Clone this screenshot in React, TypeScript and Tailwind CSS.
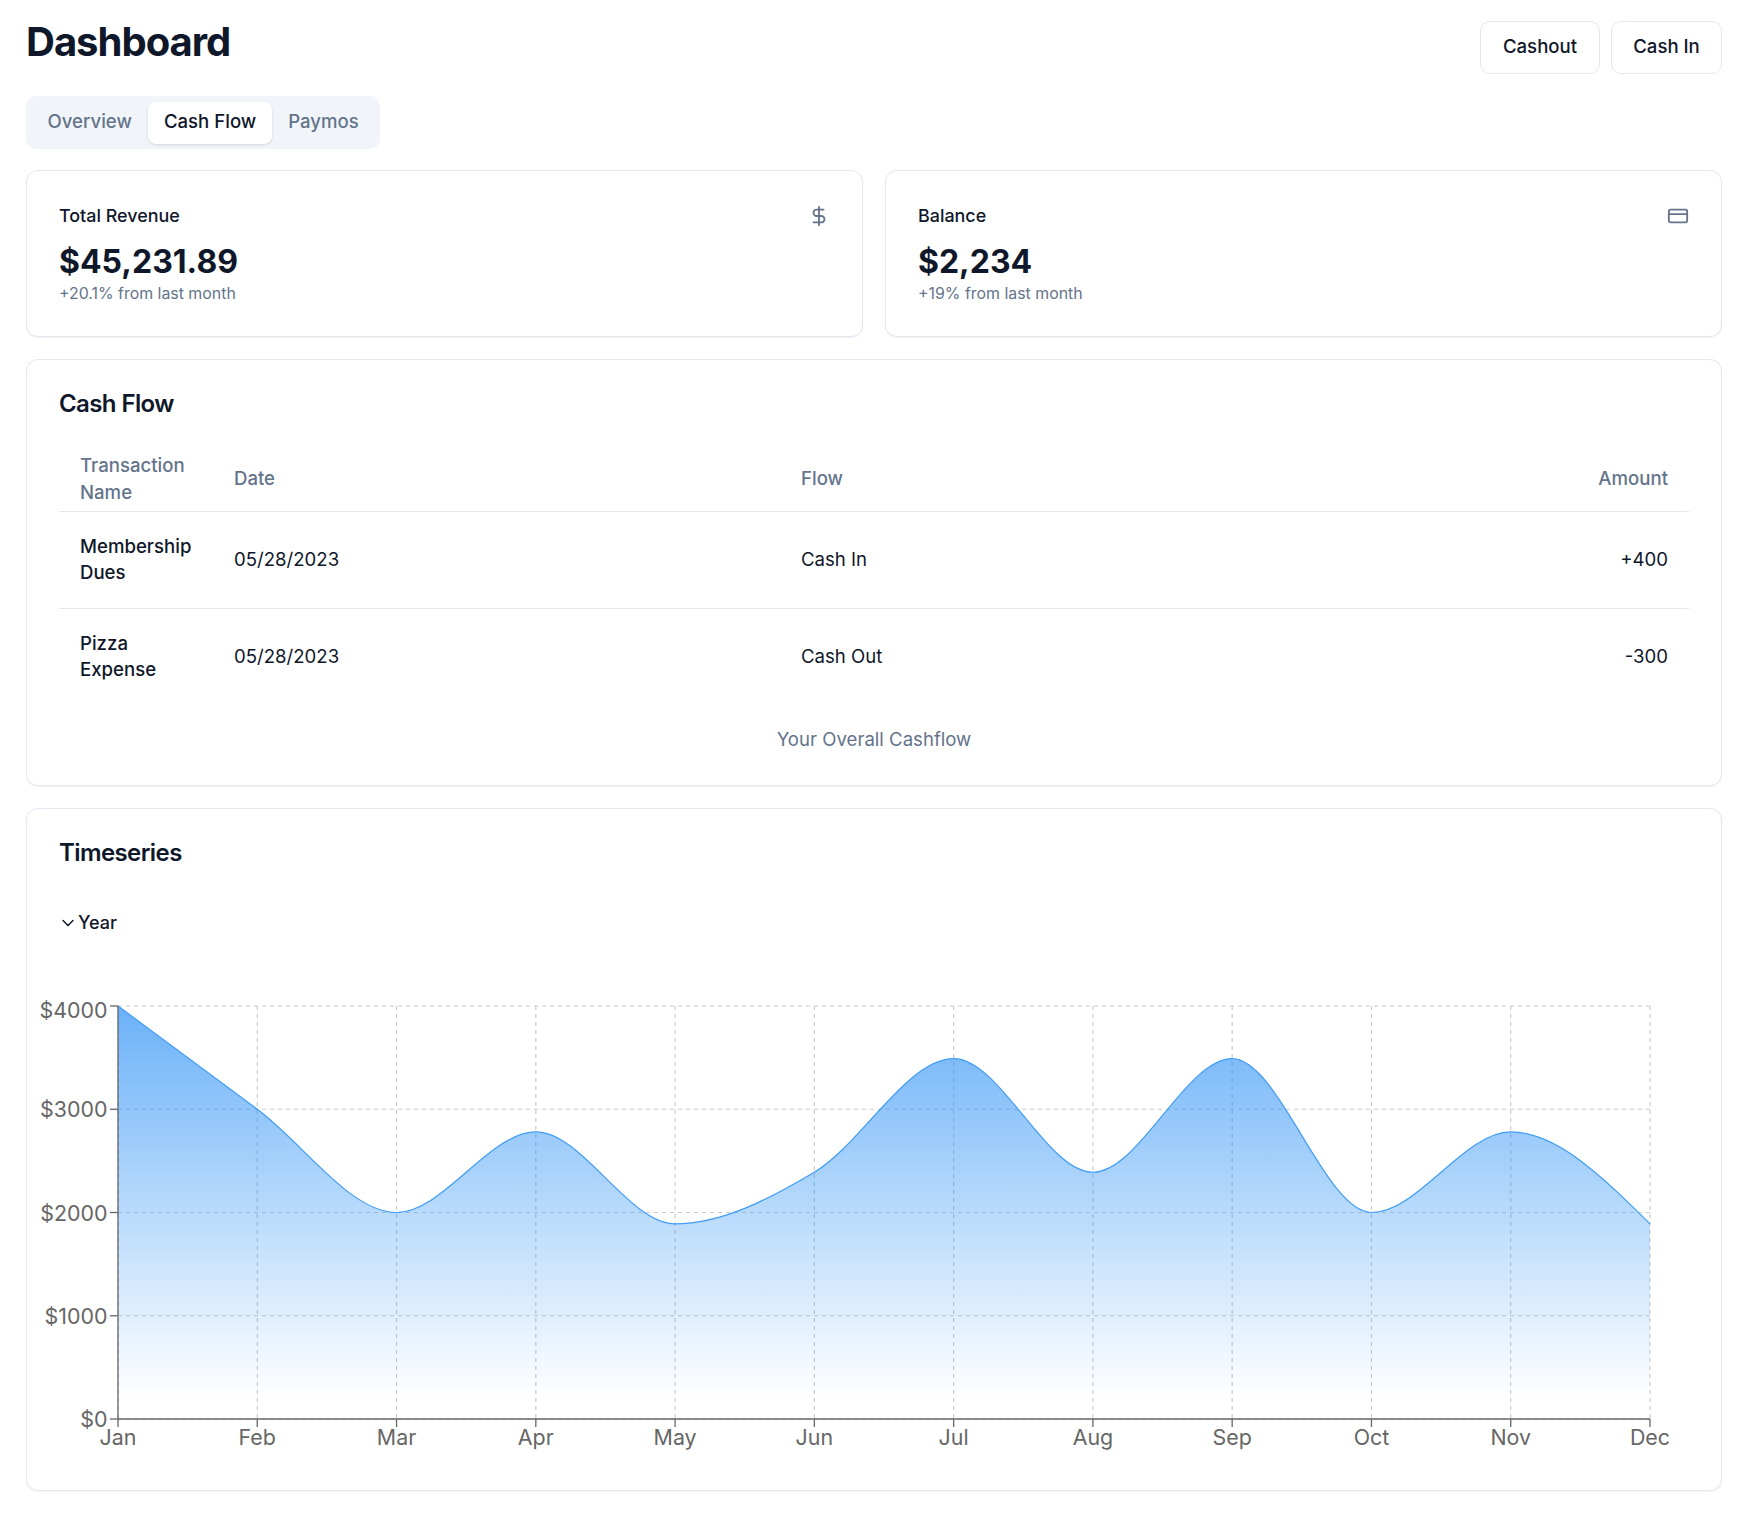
import { ChevronDown, CreditCard, DollarSign } from "lucide-react";

const data = [4000, 3000, 2000, 2780, 1890, 2390, 3490, 2390, 3490, 2000, 2780, 1890];
const months = ["Jan", "Feb", "Mar", "Apr", "May", "Jun", "Jul", "Aug", "Sep", "Oct", "Nov", "Dec"];

const X0 = 118;
const X1 = 1650;
const Y0 = 12;
const Y1 = 425;
const px = (i: number) => X0 + (i * (X1 - X0)) / 11;
const py = (v: number) => Y1 - ((Y1 - Y0) * v) / 4000;

function monotonePath(pts: [number, number][]) {
  const n = pts.length;
  const sign = (v: number) => (v < 0 ? -1 : 1);
  const t: number[] = new Array(n).fill(0);
  for (let i = 1; i < n - 1; i++) {
    const h0 = pts[i][0] - pts[i - 1][0];
    const h1 = pts[i + 1][0] - pts[i][0];
    const s0 = (pts[i][1] - pts[i - 1][1]) / h0;
    const s1 = (pts[i + 1][1] - pts[i][1]) / h1;
    const p = (s0 * h1 + s1 * h0) / (h0 + h1);
    t[i] = (sign(s0) + sign(s1)) * Math.min(Math.abs(s0), Math.abs(s1), 0.5 * Math.abs(p)) || 0;
  }
  const h = pts[1][0] - pts[0][0];
  t[0] = (3 * (pts[1][1] - pts[0][1])) / h / 2 - t[1] / 2;
  const hl = pts[n - 1][0] - pts[n - 2][0];
  t[n - 1] = (3 * (pts[n - 1][1] - pts[n - 2][1])) / hl / 2 - t[n - 2] / 2;
  let d = `M${pts[0][0]},${pts[0][1]}`;
  for (let i = 0; i < n - 1; i++) {
    const dx = (pts[i + 1][0] - pts[i][0]) / 3;
    d += `C${pts[i][0] + dx},${pts[i][1] + dx * t[i]},${pts[i + 1][0] - dx},${pts[i + 1][1] - dx * t[i + 1]},${pts[i + 1][0]},${pts[i + 1][1]}`;
  }
  return d;
}

const line = monotonePath(data.map((v, i) => [px(i), py(v)] as [number, number]));
const area = `${line}L${X1},${Y1}L${X0},${Y1}Z`;
const yTicks = [0, 1000, 2000, 3000, 4000];

function Chart() {
  return (
    <svg width="1696" height="470" className="block -ml-[33px]" viewBox="26 0 1696 470" style={{ fontFamily: "Inter, sans-serif" }}>
      <defs>
        <linearGradient id="fillArea" x1="0" y1="0" x2="0" y2="1">
          <stop offset="0.0" stopColor="#2b90f5" stopOpacity="0.7" />
          <stop offset="0.95" stopColor="#2b90f5" stopOpacity="0" />
        </linearGradient>
      </defs>
      <g stroke="#ccc" strokeDasharray="4 4" strokeWidth="1.2" fill="none">
        {yTicks.map((v) => (
          <line key={v} x1={X0} x2={X1} y1={py(v)} y2={py(v)} />
        ))}
        {months.map((m, i) => (
          <line key={m} x1={px(i)} x2={px(i)} y1={Y0} y2={Y1} />
        ))}
      </g>
      <path d={area} fill="url(#fillArea)" />
      <path d={line} fill="none" stroke="#3f9cf5" strokeWidth="1.2" />
      <g stroke="#666" strokeWidth="1.3" fill="none">
        <line x1={X0} x2={X1} y1={Y1} y2={Y1} />
        <line x1={X0} x2={X0} y1={Y0} y2={Y1} />
        {yTicks.map((v) => (
          <line key={v} x1={X0 - 8} x2={X0} y1={py(v)} y2={py(v)} />
        ))}
        {months.map((m, i) => (
          <line key={m} x1={px(i)} x2={px(i)} y1={Y1} y2={Y1 + 8} />
        ))}
      </g>
      <g fill="#666" fontSize="21.4">
        {yTicks.map((v) => (
          <text key={v} x={107.5} y={(v === 4000 ? py(v) + 4 : py(v)) + 8} textAnchor="end">
            ${v}
          </text>
        ))}
        {months.map((m, i) => (
          <text key={m} x={px(i)} y={Y1 + 26} textAnchor="middle">
            {m}
          </text>
        ))}
      </g>
    </svg>
  );
}

const rows = [
  ["Membership Dues", "05/28/2023", "Cash In", "+400"],
  ["Pizza Expense", "05/28/2023", "Cash Out", "-300"],
];

export default function App() {
  return (
    <div className="bg-white pl-[26px] pr-[36px] pt-[21px] pb-[41px] text-[#0f172a] font-['Inter',sans-serif] text-[18.6px]">
      <div className="flex justify-between items-start">
        <h1 className="text-[40px] leading-[42px] font-bold tracking-tight">Dashboard</h1>
        <div className="flex gap-[11px]">
          <button className="h-[53px] w-[120px] rounded-[10px] border border-[#e2e8f0] bg-white pb-[1px] font-medium">Cashout</button>
          <button className="h-[53px] w-[111px] rounded-[10px] border border-[#e2e8f0] bg-white pb-[1px] font-medium">Cash In</button>
        </div>
      </div>

      <div className="mt-[22px] inline-flex h-[53px] items-center rounded-[10px] bg-[#f1f5f9] p-[5.5px] text-[#64748b] font-medium">
        <div className="px-4 pb-[1px]">Overview</div>
        <div className="flex h-[42px] items-center rounded-[8px] bg-white px-4 pb-[1px] text-[#0f172a] shadow-sm">Cash Flow</div>
        <div className="px-4 pb-[1px]">Paymos</div>
      </div>

      <div className="mt-[21px] grid grid-cols-2 gap-[22px]">
        <div className="h-[167px] rounded-[12px] border border-[#e2e8f0] bg-white p-[32px] shadow-[0_1px_2px_rgba(0,0,0,0.06)]">
          <div className="flex items-start justify-between">
            <div className="text-[17.9px] font-medium leading-[26px]">Total Revenue</div>
            <DollarSign size={22} className="mt-[2px] text-[#64748b]" />
          </div>
          <div className="mt-[11px] text-[32px] leading-[44px] font-bold">$45,231.89</div>
          <div className="text-[15.9px] leading-[19px] text-[#64748b]">+20.1% from last month</div>
        </div>
        <div className="h-[167px] rounded-[12px] border border-[#e2e8f0] bg-white p-[32px] shadow-[0_1px_2px_rgba(0,0,0,0.06)]">
          <div className="flex items-start justify-between">
            <div className="text-[17.9px] font-medium leading-[26px]">Balance</div>
            <CreditCard size={22} className="mt-[2px] text-[#64748b]" />
          </div>
          <div className="mt-[11px] text-[32px] leading-[44px] font-bold">$2,234</div>
          <div className="text-[15.9px] leading-[19px] text-[#64748b]">+19% from last month</div>
        </div>
      </div>

      <div className="mt-[22px] h-[427px] rounded-[12px] border border-[#e2e8f0] bg-white p-[32px] shadow-[0_1px_2px_rgba(0,0,0,0.06)]">
        <h2 className="text-[24px] leading-[24px] font-semibold tracking-tight">Cash Flow</h2>
        <table className="mt-[35px] w-full table-fixed border-collapse">
          <thead>
            <tr className="border-b border-[#e2e8f0] text-[#64748b]">
              <th className="w-[154px] px-[21px] pb-[3px] text-left font-medium leading-[27px] h-[60px]">Transaction Name</th>
              <th className="w-[567px] px-[21px] pb-[3px] text-left font-medium">Date</th>
              <th className="px-[21px] pb-[3px] text-left font-medium">Flow</th>
              <th className="w-[200px] px-[21px] pb-[3px] text-right font-medium">Amount</th>
            </tr>
          </thead>
          <tbody>
            {rows.map((r, i) => (
              <tr key={r[0]} className={i === 0 ? "border-b border-[#e2e8f0]" : ""}>
                <td className="h-[97px] px-[21px] pb-[2px] font-medium leading-[26px]">{r[0]}</td>
                <td className="px-[21px]">{r[1]}</td>
                <td className="px-[21px]">{r[2]}</td>
                <td className="px-[21px] text-right">{r[3]}</td>
              </tr>
            ))}
          </tbody>
          <caption className="caption-bottom mt-[21px] text-center leading-[26px] text-[#64748b]">Your Overall Cashflow</caption>
        </table>
      </div>

      <div className="mt-[22px] h-[683px] rounded-[12px] border border-[#e2e8f0] bg-white p-[32px] shadow-[0_1px_2px_rgba(0,0,0,0.06)]">
        <h2 className="text-[24px] leading-[24px] font-semibold tracking-tight">Timeseries</h2>
        <div className="mt-[46px] -ml-[1px] flex items-center text-[18px] font-medium leading-[24px]">
          <ChevronDown size={20} strokeWidth={1.7} />
          <span>Year</span>
        </div>
        <div className="mt-[59px]">
          <Chart />
        </div>
      </div>
    </div>
  );
}
